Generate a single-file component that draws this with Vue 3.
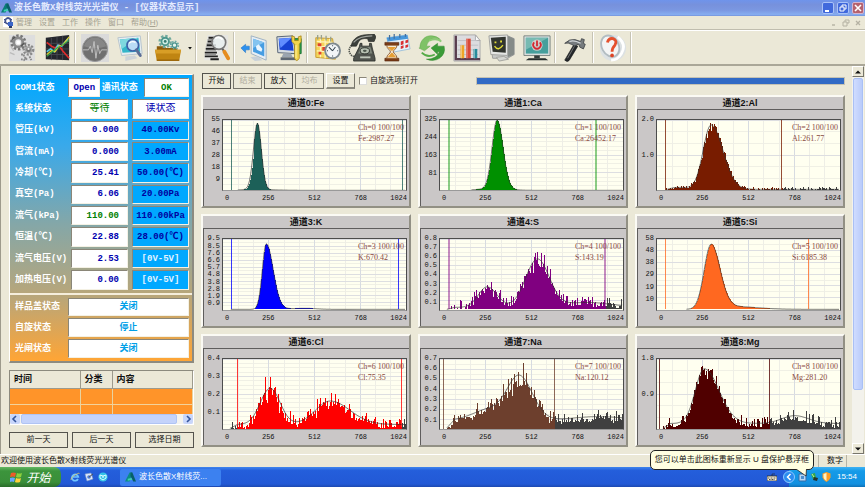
<script setup>
import { ref } from 'vue'

const W = 186
const H = 72

// Each peak: [centre, height, left sigma, right sigma] in plot units.
const specs = [
  { el: 'Fe', total: '2987.27', ticks: ['55', '46', '37', '28', '18', '9'], color: '#1c6058', start: 15, peaks: [[35, 68, 4, 4], [27, 1, 8, 20]], base: 0, noise: 0, marks: [9, 182], soft: 1 },
  { el: 'Ca', total: '26452.17', ticks: ['325', '244', '163', '81'], color: '#009000', start: 32, peaks: [[58, 70, 5, 6], [55, 2, 14, 14]], base: 0, noise: 0, marks: [9, 159], soft: 2 },
  { el: 'Al', total: '261.77', ticks: ['2.0', '1.0'], color: '#781c00', start: 9, peaks: [[55, 66, 8, 12], [22, 2, 9, 12]], base: 1, noise: 0.16, marks: [9, 127], soft: 1 },
  { el: 'K', total: '670.42', ticks: ['9.5', '8.5', '7.6', '6.6', '5.7', '4.8', '3.8', '2.8', '1.9', '0.9'], color: '#0000ff', start: 8, peaks: [[44, 67, 4, 7], [85, 1, 20, 10]], base: 0, noise: 0.02, marks: [9, 178], soft: 1 },
  { el: 'S', total: '143.19', ticks: ['0.8', '0.7', '0.6', '0.5', '0.4', '0.3', '0.2', '0.1'], color: '#800080', start: 7, peaks: [[48, 21, 9, 10], [99, 49, 12, 12], [150, 5, 25, 25]], base: 2, noise: 0.3, marks: [9, 168], soft: 2 },
  { el: 'Si', total: '6185.38', ticks: ['58', '48', '38', '29', '19', '10'], color: '#ff6820', start: 30, peaks: [[55, 66, 7, 9], [75, 3, 12, 25]], base: 0, noise: 0, marks: [9, 154], soft: 1 },
  { el: 'Cl', total: '75.35', ticks: ['0.4', '0.3', '0.2', '0.1'], color: '#ff0000', start: 7, peaks: [[48, 37, 10, 10], [109, 24, 15, 20]], base: 4, noise: 0.42, marks: [15, 181], soft: 1 },
  { el: 'Na', total: '120.12', ticks: ['0.7', '0.6', '0.5', '0.4', '0.3', '0.2', '0.1'], color: '#6d3f2d', start: 7, peaks: [[81, 40, 12, 13], [52, 12, 18, 26], [160, 4, 25, 30]], base: 8, noise: 0.3, marks: [4, 116], soft: 1 },
  { el: 'Mg', total: '281.20', ticks: ['1.8', '0.9'], color: '#500000', start: 6, peaks: [[48, 56, 9, 15], [140, 8, 13, 14]], base: 5, noise: 0.13, marks: [3, 114], soft: 1 }
]

function level(s, x) {
  let y = s.base * Math.min(1, Math.max(0, (x - s.start) / 8))
  for (const [c, h, l, r] of s.peaks) {
    const d = (x - c) / (x < c ? l : r)
    y += h * Math.exp((-d * d) / 2)
  }
  return y
}

function build(s, index) {
  let seed = 37 + index * 101
  const rand = () => {
    seed = (seed * 1103515245 + 12345) % 2147483648
    return seed / 2147483648
  }
  let inside = ''
  let outside = ''
  let curve = ''
  for (let x = s.start; x < W; x++) {
    const smooth = level(s, x)
    const jitter = (rand() + rand() - 0.95) * s.noise
    const spike = s.base ? (rand() ** 2 - 0.3) * (s.base > 1 ? 11 : 3) : 0
    const y = Math.max(0, Math.min(H, smooth * (1 + jitter) + spike))
    const bar = `M${x} ${H}V${(H - y).toFixed(1)}h1V${H}z`
    const out = s.noise >= 0.1 && (x > s.marks[1] || (s.marks[0] > 12 && x < s.marks[0]))
    if (out) outside += bar
    else if (y > 0.4) inside += bar
    curve += `${curve ? 'L' : 'M'}${x} ${(H - smooth - (s.base > 3 ? 1 : 0)).toFixed(1)}`
  }
  const n = s.ticks.length
  const minor = n === 2 ? 6 : n === 4 ? 16 : n
  return {
    ...s,
    index,
    inside,
    outside,
    curve,
    major: s.ticks.map((_, i) => (i * H) / n),
    minor: Array.from({ length: minor }, (_, i) => (i * H) / minor + (minor === n ? H / n / 2 : 0))
  }
}

const charts = specs.map(build)
const columns = Array.from({ length: 11 }, (_, i) => ({ x: ((i + 1) * W) / 12, major: (i + 1) % 3 === 0 }))

const readings = [
  { label: '管压(kV)', value: '0.000', limit: '40.00Kv' },
  { label: '管流(mA)', value: '0.000', limit: '3.00mA' },
  { label: '冷却(℃)', value: '25.41', limit: '50.00(℃)' },
  { label: '真空(Pa)', value: '6.06', limit: '20.00Pa' },
  { label: '流气(kPa)', value: '110.00', limit: '110.00kPa', ok: true },
  { label: '恒温(℃)', value: '22.88', limit: '28.00(℃)' },
  { label: '流气电压(V)', value: '2.53', limit: '[0V-5V]', range: true },
  { label: '加热电压(V)', value: '0.00', limit: '[0V-5V]', range: true }
]
const switches = [
  { label: '样品盖状态', value: '关闭' },
  { label: '自旋状态', value: '停止' },
  { label: '光闸状态', value: '关闭' }
]
const menus = ['管理', '设置', '工作', '操作', '窗口']
const spin = ref(false)
</script>

<template>
  <div class="shell">
    <header class="titlebar">
      <svg class="logo" viewBox="0 0 12 12"><path d="M0 11 5 1l3 0-3 10z" fill="#087d78" /><path d="M6 1h2l4 10H9L6 5z" fill="#075f68" /><path d="M3 8l4-1 1 2-5 1z" fill="#3fd0b0" /></svg>
      <h1>波长色散X射线荧光光谱仪 - [仪器状态显示]</h1>
      <div class="winbtns">
        <button aria-label="最小化"><svg viewBox="0 0 10 10"><path d="M2 7h4v2H2z" fill="#fff" /></svg></button>
        <button aria-label="还原"><svg viewBox="0 0 10 10"><path d="M4 4V2h4v4H6M2 4h4v4H2z" fill="none" stroke="#fff" /></svg></button>
        <button class="close" aria-label="关闭"><svg viewBox="0 0 10 10"><path d="M2 2l6 6M8 2L2 8" stroke="#fff" stroke-width="1.6" /></svg></button>
      </div>
    </header>

    <nav class="menubar">
      <svg class="menuicon" viewBox="0 0 11 11"><rect width="10" height="10" fill="#fff" /><circle cx="5" cy="4" r="2.8" fill="none" stroke="#42538c" stroke-width="1.8" /><path d="M4 0h2M1 2l1 1M9 2L8 3M1 6l1-1" stroke="#42538c" /><path d="M5 5h5v4H5z" fill="#3b66c9" /><path d="M6 9h3v2H6z" fill="#2a3a66" /></svg>
      <a v-for="m in menus" :key="m" href="#">{{ m }}</a>
      <a href="#">帮助(<u>H</u>)</a>
      <div class="mdi">
        <button aria-label="最小化子窗口"><svg viewBox="0 0 8 8"><path d="M2 6h3" stroke="#b5b2a3" stroke-width="1.4" /></svg></button>
        <button aria-label="还原子窗口"><svg viewBox="0 0 8 8"><path d="M3 3V1h4v3H5M1 3h4v4H1z" fill="none" stroke="#b5b2a3" /></svg></button>
        <button aria-label="关闭子窗口"><svg viewBox="0 0 8 8"><path d="M2 2l4 4M6 2L2 6" stroke="#b5b2a3" stroke-width="1.3" /></svg></button>
      </div>
    </nav>

    <div class="toolbar" role="toolbar" aria-label="工具栏">
      <button aria-label="系统设置">
        <svg viewBox="0 0 30 30">
          <rect x="1" y="1" width="28" height="28" fill="#dedede" />
          <circle cx="11" cy="9" r="7.2" fill="none" stroke="#777" stroke-width="3" stroke-dasharray="2.6 1.9" />
          <circle cx="11" cy="9" r="4.8" fill="#e9e9e9" stroke="#8b8b8b" stroke-width="3" />
          <circle cx="11" cy="9" r="2" fill="#fff" />
          <path d="M4 6l4-3M14 13l3-3" stroke="#555" stroke-width="1.5" />
          <circle cx="22" cy="17" r="5" fill="none" stroke="#8a8a8a" stroke-width="2.6" stroke-dasharray="2.2 1.5" />
          <circle cx="22" cy="17" r="3.2" fill="#777" stroke="#a5a5a5" stroke-width="1.5" />
          <circle cx="22" cy="16" r="1.2" fill="#eee" />
          <path d="M14 22h3v2l2 2-2 2-3-1M23 24l2 4M19 26l2 2" fill="none" stroke="#8a8a8a" stroke-width="2" stroke-dasharray="2 1" />
          <path d="M2 20l5 2M3 13l3 5" stroke="#bbb" stroke-width="1.4" />
        </svg>
      </button>
      <button aria-label="谱线">
        <svg viewBox="0 0 30 30">
          <path d="M3 4L28 1v27l-25-1z" fill="#24262d" />
          <path d="M3 10h25M3 16h25M3 22h25M9 4v24M15 3v25M21 2v26" stroke="#4d4e56" stroke-width=".8" />
          <path d="M4 9l5 4 4 2 4-3 4 6 7 8" fill="none" stroke="#e12b2b" stroke-width="1.8" />
          <path d="M4 19l4-3 4 3 4-7 4 1 7-8" fill="none" stroke="#55c7e6" stroke-width="1.8" />
          <path d="M4 22l5-4 4 1 4-6 4-1 7-9" fill="none" stroke="#d9cf32" stroke-width="1.4" />
          <path d="M4 24l6-5 5-4 4-2 9-6" fill="none" stroke="#37a24a" stroke-width="1.2" />
        </svg>
      </button>
      <i></i>
      <button aria-label="波形">
        <svg viewBox="0 0 30 30">
          <rect width="30" height="30" fill="#dadada" />
          <circle cx="15" cy="16" r="13.5" fill="#707070" stroke="#999" />
          <path d="M3 13a12.4 12.4 0 0 1 24 0q-12 4-24 0z" fill="#868686" />
          <path d="M2 17h6l2-4 2 7 2-12 2 18 2-14 2 9 2-4h6" fill="none" stroke="#c2c2c2" stroke-width="1" />
        </svg>
      </button>
      <button aria-label="监视">
        <svg viewBox="0 0 30 30">
          <path d="M2 4l24-2 2 19-22 2z" fill="#e8eef2" stroke="#b5c3cc" />
          <path d="M4 6l20-2 2 15-19 1z" fill="#35b6c9" />
          <path d="M4 6l20-2-18 12z" fill="#7ed8df" />
          <path d="M10 24l10-1 3 3-13 3z" fill="#cdd3d8" />
          <circle cx="18" cy="12" r="6.2" fill="#b9dcf5" stroke="#3d62a8" stroke-width="1.8" />
          <path d="M14 10q3-3 7-1" fill="none" stroke="#fff" stroke-width="1.5" />
          <path d="M22 17l4 6" stroke="#5b6e96" stroke-width="3.2" stroke-linecap="round" />
        </svg>
      </button>
      <i></i>
      <button aria-label="打开文件夹">
        <svg viewBox="0 0 30 30">
          <path d="M3 13h8l2 2h12v7H3z" fill="#8d5c0d" />
          <circle cx="12" cy="8" r="6" fill="none" stroke="#70a99d" stroke-width="2.4" stroke-dasharray="2.6 2" />
          <circle cx="12" cy="8" r="4" fill="#d5efe7" stroke="#4d978c" stroke-width="2" />
          <circle cx="12" cy="8" r="1.5" fill="#357b72" />
          <circle cx="22" cy="12" r="4" fill="none" stroke="#69aaa5" stroke-width="2" stroke-dasharray="1.8 1.3" />
          <circle cx="22" cy="12" r="2.4" fill="#e4f5ef" stroke="#4b938d" stroke-width="1.3" />
          <path d="M1 17h28l-2 12H3z" fill="#c08512" />
          <path d="M1 17h28l-1 4H2z" fill="#d89e26" />
          <path d="M3 28h24" stroke="#865609" />
        </svg>
      </button>
      <button class="drop" aria-label="更多"><svg viewBox="0 0 10 30"><path d="M3 14h4l-2 2.500z" fill="#111" /></svg></button>
      <i></i>
      <button aria-label="查找文档">
        <svg viewBox="0 0 30 30">
          <path d="M6 1h22v27H2z" fill="#e6e6e2" />
          <path d="M7 4h8M6 8h7M5 12h10M4 16h14M3 20h13M3 24h14M9 27h9" stroke="#202020" stroke-width="2" />
          <path d="M6 6h6M5 10h8M4 14h11M4 18h11M3 22h12" stroke="#777" stroke-width=".8" />
          <circle cx="18" cy="9" r="7.4" fill="#e8eef0" fill-opacity=".85" stroke="#777" stroke-width="1.8" />
          <path d="M14 5q4-3 8 1" stroke="#fff" stroke-width="1.8" fill="none" />
          <path d="M22 16l2 3" stroke="#555" stroke-width="2" />
          <path d="M24 19l4 7" stroke="#e58c20" stroke-width="4" stroke-linecap="round" />
        </svg>
      </button>
      <i></i>
      <button aria-label="返回">
        <svg viewBox="0 0 30 30">
          <path d="M12 2l16 5v21L12 21z" fill="#e7eef4" stroke="#9baec0" />
          <path d="M14 5l12 4v15l-12-5z" fill="#469de2" />
          <path d="M14 5l12 4-12 6z" fill="#85c4f0" />
          <path d="M17 13l3-2 4 5-1 3-5-2z" fill="#eaf6ff" />
          <path d="M11 25l8-1 5 4-8 1z" fill="#c7d0d8" />
          <path d="M1 15l5-4v2h4v4H6v3z" fill="#2d91ef" stroke="#1769bb" stroke-width=".5" />
        </svg>
      </button>
      <button aria-label="维护">
        <svg viewBox="0 0 30 30">
          <path d="M17 5h11v16H17z" fill="#30a34d" stroke="#146b2b" />
          <path d="M20 8h6v8h-6z" fill="#82da78" />
          <path d="M2 3l17-1 3 19-19-1z" fill="#d5dce3" stroke="#536072" />
          <path d="M4 5l14-1 2 14-15-1z" fill="#1742d2" />
          <path d="M4 5l14-1L6 15z" fill="#608cff" />
          <path d="M9 21h8l2 4H7z" fill="#9aa4b0" />
          <path d="M6 25h16v3H6z" fill="#5d6774" />
          <path d="M18 2v6l3 3v15q2 5 5 0V11l2-3V2l-3 1v4h-4V3z" fill="#f1d54d" stroke="#a27e12" stroke-width=".8" />
          <path d="M22.500 12v14" stroke="#fff5ad" />
        </svg>
      </button>
      <i></i>
      <button aria-label="计划">
        <svg viewBox="0 0 30 30">
          <path d="M3 4l18 1 3 22-21-2z" fill="#f5d65a" stroke="#c79a30" />
          <path d="M4 8l17 1M4 13l17 1M4 18l17 1M8 5v20M13 5v21M18 5v21" stroke="#fff4bd" stroke-width="1.4" />
          <path d="M5 1v5M9 1v5M14 2v5M19 3v5" stroke="#98a18c" stroke-width="1.4" />
          <path d="M5 10h4v3H5zM10 14h4v4h-4zM6 19h3v3H6z" fill="#df432e" />
          <circle cx="21" cy="18" r="8" fill="#f2f5f7" stroke="#7e8990" stroke-width="2" />
          <path d="M21 18l-4-4M21 18l3-4M21 12v1M21 23v1M15 18h1M26 18h1" fill="none" stroke="#34434e" stroke-width="1.1" />
        </svg>
      </button>
      <button aria-label="通讯">
        <svg viewBox="0 0 30 30">
          <path d="M4 12Q-1 17 3 22q2 3 5 1" fill="none" stroke="#50544d" stroke-width="1.600" stroke-dasharray="1.500 .8" />
          <path d="M3 13L5 8Q9 2 17 1l11-1 2 3-2 5h-6l-1-3q-8-1-10 4l-2 4z" fill="#3c403b" stroke="#242724" stroke-width=".7" />
          <path d="M6 9Q12 2 26 2" fill="none" stroke="#a1a49e" stroke-width="1.200" />
          <path d="M12 14l1-4h2v3h8v-3h2l1 5 3 11v3H6v-3z" fill="#50544e" stroke="#262a26" stroke-width=".8" />
          <path d="M13 14h11l2 7H11z" fill="#7d857a" />
          <ellipse cx="18" cy="18" rx="5" ry="3.300" fill="#b6c0b1" stroke="#262b26" />
          <ellipse cx="18" cy="18" rx="2" ry="1.200" fill="#4b564b" />
          <path d="M13 25h11" stroke="#c0c8bb" stroke-width="2" />
        </svg>
      </button>
      <button aria-label="等待">
        <svg viewBox="0 0 30 30">
          <path d="M4 4l22-3 3 15-21 4z" fill="#e6f3fb" stroke="#9dc0d8" />
          <path d="M4 4l22-3 1 4-22 3z" fill="#4797db" />
          <path d="M7 1v5M12 0v5M18 0v4M24 0v3" stroke="#466e99" stroke-width="1.300" />
          <path d="M19 8l3-1v4l-3 1zM24 7l3-1v3l-3 1zM19 13l3-1v3l-3 1zM24 12l3-1v3l-3 1z" fill="#da2f32" />
          <path d="M2 9h15v3H2zM2 26h15v3H2z" fill="#7a3b16" stroke="#4d210a" stroke-width=".6" />
          <path d="M4 12h11c0 4-4 5-4 7s4 3 4 7H4c0-4 4-5 4-7s-4-3-4-7z" fill="#f6ead5" stroke="#8f5829" />
          <path d="M5 14h9l-4 4H9zM9 20h1l4 5H5z" fill="#e59f35" />
        </svg>
      </button>
      <button aria-label="刷新">
        <svg viewBox="0 0 30 30">
          <path d="M2 15C2 6 9 1 15 2q5 0 9 4-12-4-15 7h4l-6 5-6-3z" fill="#7fc267" stroke="#5aa548" stroke-width=".5" />
          <path d="M14 15l7-5v3h7q2 8-5 13-6 4-14 1 11 0 14-8h-2v3z" fill="#3b9b38" stroke="#2d832c" stroke-width=".5" />
          <path d="M12 7q8-3 13 1" fill="none" stroke="#8dcb77" stroke-width="2" />
          <path d="M4 20q6 6 14 2" fill="none" stroke="#56ab49" stroke-width="2" />
        </svg>
      </button>
      <button aria-label="报表">
        <svg viewBox="0 0 30 30">
          <path d="M1 1h23l5 6v22H1z" fill="#dcdcdf" stroke="#aaa" />
          <path d="M24 1v6h5z" fill="#f9f9f9" stroke="#aaa" />
          <path d="M3 2v25h26" fill="none" stroke="#593d4e" stroke-width="2.500" />
          <path d="M5 7h21M5 12h22M5 17h22M5 22h22" stroke="#bfc0c5" />
          <path d="M8 12h4v14H8z" fill="#eea526" />
          <path d="M14 5h5v21h-5z" fill="#d94937" />
          <path d="M22 16h4v10h-4z" fill="#278b9b" />
          <path d="M9 12v14M15 5v21M23 16v10" stroke="#fff" stroke-opacity=".45" />
        </svg>
      </button>
      <button aria-label="在线状态">
        <svg viewBox="0 0 30 30">
          <path d="M2 2h19l7 3v17l-7 4H5z" fill="#c7c9c7" stroke="#999" />
          <path d="M21 2l7 3v17l-7 3z" fill="#858b88" />
          <path d="M1 2l20-1v22L3 22z" fill="#e4e5e3" stroke="#a0a19e" />
          <path d="M3 4l16-1v17L5 19z" fill="#32352f" />
          <path d="M7 13q4 6 9-1" fill="none" stroke="#e2dc36" stroke-width="1.500" />
          <path d="M8 8v2M14 7v2" stroke="#e2dc36" stroke-width="2" />
          <path d="M9 25l8-1 5 3-10 2z" fill="#d5d6d2" stroke="#a2a29d" />
        </svg>
      </button>
      <button aria-label="电源">
        <svg viewBox="0 0 30 30">
          <path d="M1 2h28v21H1z" fill="#dce2e1" stroke="#75817e" />
          <path d="M3 4h24v17H3z" fill="#469f9c" />
          <path d="M3 4h24L3 17z" fill="#77bab2" />
          <circle cx="15" cy="12" r="6" fill="#f1d7d5" fill-opacity=".75" />
          <path d="M12 9a4 4 0 1 0 6 0M15 7v6" fill="none" stroke="#d52730" stroke-width="1.900" />
          <path d="M12 23h6v3h-6z" fill="#333c3a" /><path d="M6 26h18l3 2H3z" fill="#252d2c" />
        </svg>
      </button>
      <i></i>
      <button aria-label="工具">
        <svg viewBox="0 0 30 30">
          <path d="M14 11l4 2-9 15q-2 3-5 0z" fill="#24282b" stroke="#0f1112" stroke-width=".6" />
          <path d="M15 12L7 26" stroke="#777" />
          <path d="M4 10q5-5 11-4l6 2 1-3 3 1-1 4 2 1-2 5-4-2v-2l-3-1-2 2-4-2q-3-2-7-1z" fill="#777c7f" stroke="#34393d" stroke-width=".8" />
          <path d="M9 8q5-2 12 2" stroke="#d5dadd" fill="none" stroke-width="1.200" />
        </svg>
      </button>
      <i></i>
      <button aria-label="帮助">
        <svg viewBox="0 0 30 30">
          <circle cx="15" cy="15" r="14" fill="#dce1e3" />
          <ellipse cx="12" cy="13" rx="9" ry="12" transform="rotate(-28 12 13)" fill="#f4f5f5" stroke="#b2bcc1" stroke-width="2" />
          <path d="M20 3q10 8 4 18-4 7-11 7" fill="none" stroke="#fff" stroke-width="3" />
          <path d="M9 9q1-5 6-4 5 2 2 7-3 3-3 7" fill="none" stroke="#e5502d" stroke-width="3" />
          <circle cx="14" cy="23" r="2" fill="#dc4425" />
        </svg>
      </button>
      <i></i>
    </div>

    <main class="workspace">
      <aside class="side">
        <section class="status">
          <div class="group readings">
            <div class="row first">
              <label for="com">COM1状态</label><input id="com" class="blue" value="Open" readonly />
              <label for="link">通讯状态</label><input id="link" class="green" value="OK" readonly />
            </div>
            <div class="row">
              <label for="sys">系统状态</label><input id="sys" class="large green" value="等待" readonly />
              <input class="large blue" aria-label="状态读取" value="读状态" readonly />
            </div>
            <div v-for="(r, i) in readings" :key="r.label" class="row">
              <label :for="'reading' + i">{{ r.label }}</label>
              <input :id="'reading' + i" class="num" :class="r.ok ? 'green' : 'blue'" :value="r.value" readonly />
              <input class="limit" :class="{ range: r.range }" :aria-label="r.label + '设定'" :value="r.limit" readonly />
            </div>
          </div>
          <div class="group switches">
            <div v-for="(s, i) in switches" :key="s.label" class="row wide">
              <label :for="'switch' + i">{{ s.label }}</label>
              <input :id="'switch' + i" class="sky" :value="s.value" readonly />
            </div>
          </div>
        </section>

        <div class="log">
          <table>
            <thead><tr><th class="c1">时间</th><th class="c2">分类</th><th>内容</th></tr></thead>
            <tbody><tr><td></td><td></td><td></td></tr><tr class="short"><td></td><td></td><td></td></tr></tbody>
          </table>
          <div class="hscroll">
            <button aria-label="向左滚动"><svg viewBox="0 0 8 8"><path d="M5 1L2 4l3 3" fill="none" stroke="#34549b" stroke-width="1.600" /></svg></button>
            <span class="hthumb"></span>
            <button aria-label="向右滚动"><svg viewBox="0 0 8 8"><path d="M3 1l3 3-3 3" fill="none" stroke="#34549b" stroke-width="1.600" /></svg></button>
          </div>
        </div>
        <div class="days"><button class="flat">前一天</button><button class="flat">后一天</button><button class="flat">选择日期</button></div>
      </aside>

      <section class="content">
        <div class="controls">
          <button class="flat">开始</button>
          <button class="flat" disabled>结束</button>
          <button class="flat">放大</button>
          <button class="flat" disabled>均布</button>
          <button class="raised">设置</button>
          <input id="spin" v-model="spin" type="checkbox" /><label for="spin">自旋选项打开</label>
          <progress value="100" max="100" aria-label="测量进度"></progress>
        </div>
        <div class="charts">
          <article v-for="c in charts" :key="c.el" class="card">
            <h2>通道{{ c.index }}:{{ c.el }}</h2>
            <div class="chart">
              <div class="yaxis"><span v-for="t in c.ticks" :key="t">{{ t }}</span></div>
              <div class="plot">
                <svg viewBox="0 0 186 72" preserveAspectRatio="none" shape-rendering="crispEdges">
                  <line v-for="y in c.minor" :key="'n' + y" x1="0" x2="186" :y1="y" :y2="y" stroke="#f0f0e4" />
                  <line v-for="g in columns" :key="g.x" :x1="g.x" :x2="g.x" y1="0" y2="72" :stroke="g.major ? '#d6dae0' : '#eeeee6'" />
                  <line v-for="y in c.major" :key="'m' + y" x1="0" x2="186" :y1="y" :y2="y" stroke="#dcdde0" />
                  <path :d="c.outside" fill="#404040" />
                  <path :d="c.inside" :fill="c.color" />
                  <path :d="c.curve" fill="none" stroke="#333" stroke-width=".7" shape-rendering="auto" />
                  <line v-for="m in c.marks" :key="m" :x1="m" :x2="m" y1="0" y2="72" :stroke="c.color" :stroke-width="c.soft" :stroke-opacity="c.soft === 2 ? 0.45 : 0.8" />
                </svg>
                <p class="legend">Ch={{ c.index }} 100/100<br />{{ c.el }}:{{ c.total }}</p>
              </div>
              <div class="xaxis"><span>0</span><span>256</span><span>512</span><span>768</span><span>1024</span></div>
            </div>
          </article>
        </div>
      </section>

      <div class="vscroll">
        <button aria-label="向上滚动"><svg viewBox="0 0 8 8"><path d="M1 5.500h6L4 2.500z" fill="#111" /></svg></button>
        <span class="vthumb"></span>
        <span class="vtrack"></span>
        <button aria-label="向下滚动"><svg viewBox="0 0 8 8"><path d="M1 2.500h6L4 5.500z" fill="#111" /></svg></button>
      </div>
    </main>

    <div class="statusbar"><span>欢迎使用波长色散X射线荧光光谱仪</span><span class="pane">数字</span><span class="pane"></span></div>

    <footer class="taskbar">
      <button class="start">
        <svg viewBox="0 0 12 12"><path d="M1 2q2-1 5 0L5 6Q3 5 0 6z" fill="#ee5a29" /><path d="M7 2q2 1 5 0l-1 4q-3 1-5 0z" fill="#8dd03c" /><path d="M0 7q3-1 5 0l-1 4q-2-1-4 0z" fill="#66a5ff" /><path d="M6 7q3 1 5 0l-1 4q-3 1-5 0z" fill="#ffd23b" /></svg>
        开始
      </button>
      <div class="quick">
        <button aria-label="浏览器"><svg viewBox="0 0 10 10"><path d="M8 7a3.200 3.200 0 1 1 .3-2H3" fill="none" stroke="#6fc4ff" stroke-width="1.700" /><path d="M1 8Q0 6 5 3t4-1" fill="none" stroke="#f0d35a" stroke-width=".7" /></svg></button>
        <button aria-label="显示桌面"><svg viewBox="0 0 10 10"><path d="M1 2l6-1 2 6-6 2z" fill="#dfe9f8" stroke="#7f97c8" stroke-width=".6" /><circle cx="5" cy="5" r="1.800" fill="#4f7cd5" /><path d="M5 5l4-3" stroke="#555" /></svg></button>
        <button aria-label="安全工具"><svg viewBox="0 0 10 10"><circle cx="5" cy="5" r="4.600" fill="#35c4e8" /><path d="M2 3l3 1 3-1v3L5 8 2 6z" fill="none" stroke="#dff" /><path d="M4 5h2" stroke="#fff" /></svg></button>
      </div>
      <button class="task">
        <svg viewBox="0 0 12 12"><path d="M0 11 5 1l3 0-3 10z" fill="#0a8d84" /><path d="M6 1h2l4 10H9L6 5z" fill="#075f68" /><path d="M3 8l4-1 1 2-5 1z" fill="#3fd0b0" /></svg>
        波长色散X射线荧...
      </button>
      <svg class="keyboard" viewBox="0 0 10 8"><path d="M0 3h10v5H0z" fill="#fff8df" stroke="#222" stroke-width=".8" /><path d="M1 5h8M2 6.500h6" stroke="#222" stroke-width=".8" stroke-dasharray="1 .5" /><path d="M5 3V1h3" fill="none" stroke="#222" stroke-width=".6" /></svg>
      <div class="tray">
        <button class="chevron" aria-label="隐藏图标"><svg viewBox="0 0 12 12"><circle cx="6" cy="6" r="5.500" fill="#2b8df0" stroke="#8ec8ff" /><path d="M7.500 3L4.500 6l3 3" fill="none" stroke="#fff" stroke-width="1.500" /></svg></button>
        <svg viewBox="0 0 9 10"><path d="M1 2h7v7H1z" fill="#b8d8f4" stroke="#356ca8" /><path d="M3 4h3v3H3z" fill="#4a8fd0" /></svg>
        <svg viewBox="0 0 9 10"><path d="M1 2l4-1 1 5-3 1z" fill="#38a544" /><path d="M4 5l4 1-1 3-4-1z" fill="#26332b" /><path d="M2 2l2 3" stroke="#bff0a0" /></svg>
        <svg viewBox="0 0 9 10"><path d="M4.500 0l4 1.500v4q-1 3-4 4.500-3-1.500-4-4.500v-4z" fill="#ff9c22" /><path d="M4.500 1v8q-3-1.500-3-4V2z" fill="#fff1c4" /></svg>
        <time>15:54</time>
        <div class="balloon" role="status">
          您可以单击此图标重新显示 U 盘保护悬浮框
          <svg viewBox="0 0 14 8"><path d="M0 0l10 7 .5-7" fill="#ffffe1" stroke="#222" stroke-width=".8" /></svg>
        </div>
      </div>
    </footer>
  </div>
</template>

<style>
body { margin: 0; background: #ece9d8; }
</style>

<style scoped>
* { box-sizing: border-box; }
.shell {
  min-height: 100vh;
  display: flex;
  flex-direction: column;
  background: #ebe8d7;
  color: #111;
  font: 8px/12px "Liberation Sans", "Noto Sans CJK SC", sans-serif;
}
button { font: inherit; color: inherit; padding: 0; margin: 0; border: 0; background: none; white-space: nowrap; }
input { font: inherit; margin: 0; min-width: 0; }
svg { display: block; flex: none; }
h1, h2, p { margin: 0; }

.titlebar { height: 16px; display: flex; align-items: center; gap: 2px; padding: 0 1px; color: #fff; background: linear-gradient(#6f94eb, #7791dc 30%, #7b98e2 65%, #86adf0 90%, #7493dc); }
.logo { width: 11px; height: 12px; }
h1 { flex: 1; font: bold 9px/14px "Liberation Mono", "Noto Sans CJK SC", monospace; color: #e4ebff; }
.winbtns { display: flex; gap: 3px; }
.winbtns button { width: 12px; height: 12px; border: 1px solid #a9c2f8; border-radius: 2px; background: #4169dc; }
.winbtns .close { background: #b5626e; border-color: #d5b5d0; }
.winbtns svg { width: 10px; height: 10px; }

.menubar { height: 14px; display: flex; align-items: center; gap: 7px; padding: 0 3px; border-bottom: 1px solid #c0bdae; }
.menubar a { color: #a5a292; text-decoration: none; }
.menuicon { width: 11px; height: 11px; margin-right: -5px; }
.mdi { margin-left: auto; display: flex; gap: 4px; }
.mdi svg { width: 8px; height: 8px; }

.toolbar { height: 36px; display: flex; align-items: center; padding-left: 4px; border-top: 1px solid #fff; border-bottom: 2px solid #aaa798; }
.toolbar button { width: 35px; height: 31px; display: flex; align-items: center; justify-content: center; }
.toolbar svg { width: 28px; height: 28px; }
.toolbar .drop { width: 10px; }
.toolbar .drop svg { width: 10px; }
.toolbar i { width: 2px; height: 31px; margin-right: 1px; border-left: 1px solid #c6c3b4; border-right: 1px solid #fff; }

.workspace { flex: 1; display: flex; border-left: 1px solid #9d9a8c; }
.side { width: 185px; margin: 8px 7px 6px 8px; display: flex; flex-direction: column; gap: 7px; flex: none; }
.status { flex: 1; display: flex; flex-direction: column; border: 1px solid #fff; border-right: 2px solid #8d8b80; border-bottom: 2px solid #8d8b80; background: linear-gradient(#00a8ff, #3aa9ea 25%, #84a7a8 52%, #baa678 78%, #ffa535); }
.group { display: grid; gap: 2px; padding: 3px 3px 3px 5px; }
.readings { flex: 7 1 0; grid-auto-rows: 1fr; border-bottom: 2px solid #f5eedc; }
.switches { flex: 2 1 0; grid-auto-rows: 1fr; }
.row { display: grid; grid-template-columns: 52px 57px 57px; justify-content: space-between; align-items: stretch; min-height: 0; column-gap: 1px; font: bold 9px/12px "Liberation Mono", "Noto Sans CJK SC", monospace; }
.row.first { grid-template-columns: 52px 32px 41px 45px; }
.row.wide { grid-template-columns: 52px 121px; }
.row label { align-self: center; color: #fff; white-space: nowrap; }
.row input { width: 100%; padding: 0; text-align: center; background: #fff; border: 1px solid #8a8678; border-right-color: #f4f1e4; border-bottom-color: #f4f1e4; }
.row .blue { color: #0000b0; }
.row .green { color: #008000; }
.row .sky { color: #00a0e8; }
.row .large { font-size: 10px; font-weight: 400; }
.row .num { text-align: right; padding-right: 8px; }
.row .limit { background: #00a8ff; color: #0000a0; }
.row .range { color: #e3f4ff; }

.log { border: 1px solid #8c8a7e; border-right-color: #fff; border-bottom-color: #fff; }
table { width: 100%; border-collapse: collapse; table-layout: fixed; }
th { height: 17px; padding: 0 4px; text-align: left; font: bold 9px/12px "Noto Sans CJK SC", sans-serif; border-right: 1px solid #9d9a8c; border-bottom: 1px solid #9d9a8c; }
.c1 { width: 70px; }
.c2 { width: 32px; }
td { height: 16px; padding: 0; background: #ff9429; border-right: 1px solid #e8d3a0; border-bottom: 1px solid #f3d29b; }
.short td { height: 10px; border-bottom: 0; }
.hscroll { display: flex; gap: 1px; height: 10px; background: #f4f3ee; }
.hscroll button { width: 10px; background: #c8d6fb; border-radius: 2px; }
.hscroll svg { width: 8px; height: 8px; margin: 0 auto; }
.hthumb { flex: 1; margin-right: 5px; border-radius: 2px; border: 1px solid #b0c4f4; background: #c4d3fb; }
.days { display: grid; grid-template-columns: 1fr 1fr 1fr; gap: 4px; }
.flat { height: 16px; border: 1px solid #54534d; line-height: 12px; }
.flat:disabled { color: #b0ad9e; border-color: #77756b; }

.content { flex: 1; min-width: 0; display: flex; flex-direction: column; gap: 6px; padding: 7px 7px 7px 0; }
.controls { display: flex; align-items: center; gap: 2px; height: 16px; padding-left: 1px; }
.controls button { width: 29px; }
.raised { height: 16px; border: 1px solid #fff; border-right-color: #77756b; border-bottom: 2px solid #8d8b80; }
.controls input { width: 8px; height: 8px; margin: 0 1px 0 2px; appearance: none; background: #fff; border: 1px solid #8a8678; border-right-color: #ddd; border-bottom-color: #ddd; }
.controls input:checked { background: #316ac5; }
progress { flex: 1; min-width: 0; height: 8px; margin-left: 56px; appearance: none; border: 1px solid #c5c2b3; background: #fff; }
progress::-webkit-progress-bar { background: #fff; }
progress::-webkit-progress-value { background: #316ac5; }

.charts { flex: 1; display: grid; grid-template-columns: repeat(3, minmax(0, 1fr)); grid-auto-rows: 1fr; gap: 6px 7px; }
.card { display: flex; flex-direction: column; background: #cac7c7; border: 2px solid #fbfaf4; border-right-color: #929084; border-bottom-color: #929084; }
h2 { text-align: center; font: bold 9px/12px "Liberation Sans", "Noto Sans CJK SC", sans-serif; }
.chart { flex: 1; display: grid; grid-template-columns: 18px minmax(0, 1fr); grid-template-rows: minmax(40px, 1fr) 15px; padding: 9px 2px 0 0; border-top: 1px solid #5f5d5d; border-left: 1px solid #5f5d5d; font: 7px/14px "Liberation Mono", monospace; }
.yaxis { display: grid; grid-auto-rows: 1fr; justify-items: end; padding-right: 2px; }
.yaxis span { height: 0; line-height: 0; }
.plot { position: relative; background: #fffff0; border: 1px solid #4c4c4c; border-bottom-color: #999; overflow: hidden; }
.plot svg { position: absolute; inset: 0; width: 100%; height: 100%; }
.legend { position: absolute; top: 2px; right: 0; width: 48px; font: 8px/11px "Liberation Serif", serif; color: #8a4a42; white-space: nowrap; }
.xaxis { grid-column: 2; display: grid; grid-template-columns: repeat(8, minmax(0, 1fr)); }
.xaxis span { grid-row: 1; text-align: center; }
.xaxis span:nth-child(1) { grid-column: 1; text-align: left; padding-left: 3px; }
.xaxis span:nth-child(2) { grid-column: 2 / 4; }
.xaxis span:nth-child(3) { grid-column: 4 / 6; }
.xaxis span:nth-child(4) { grid-column: 6 / 8; }
.xaxis span:nth-child(5) { grid-column: 8; text-align: right; }

.vscroll { width: 12px; margin-right: 1px; display: flex; flex-direction: column; background: #f3f2ec; }
.vscroll button { height: 11px; background: #ece9d8; border: 1px solid #fff; border-right-color: #77756b; border-bottom-color: #77756b; }
.vscroll svg { width: 8px; height: 8px; margin: 0 auto; }
.vthumb { flex: 312 1 0; margin: 1px 1px 0; border: 1px solid #a9c0f5; border-radius: 2px; background: linear-gradient(90deg, #cfdcff, #b9cbfa); }
.vtrack { flex: 53 1 0; }

.statusbar { height: 13px; display: flex; align-items: center; padding: 0 1px; border-top: 1px solid #fff; }
.statusbar span:first-child { flex: 1; }
.pane { width: 28px; height: 12px; padding-left: 8px; border-left: 1px solid #b7b4a5; }
.pane:last-child { width: 18px; }

.taskbar { height: 20px; display: flex; align-items: center; color: #fff; background: linear-gradient(#3f86ee, #245edb 18%, #2259d6 85%, #1d49b0); }
.start { width: 61px; height: 20px; display: flex; align-items: center; justify-content: center; gap: 4px; border-radius: 0 7px 7px 0; background: linear-gradient(#63b763, #3c943c 20%, #3a8f3a 75%, #2a6d2a); font: italic 12px/16px "Noto Sans CJK SC", sans-serif; }
.start svg { width: 12px; height: 12px; }
.quick { display: flex; gap: 4px; padding: 0 12px 0 9px; }
.quick svg { width: 10px; height: 10px; }
.task { width: 101px; height: 17px; display: flex; align-items: center; gap: 3px; padding-left: 5px; border-radius: 2px; background: #3c81f0; }
.task svg { width: 11px; height: 12px; }
.keyboard { width: 10px; height: 8px; margin-left: auto; margin-right: 12px; }
.tray { position: relative; height: 20px; display: flex; align-items: center; gap: 3px; padding-right: 8px; background: linear-gradient(#3fb2f4, #159be8 20%, #1290e0 85%, #0f70b5); }
.tray > svg { width: 9px; height: 10px; }
.chevron { margin-left: -6px; }
.chevron svg { width: 12px; height: 12px; }
time { margin-left: 3px; }
.balloon { position: absolute; right: 51px; bottom: 17px; padding: 3px 4px; color: #111; background: #ffffe1; border: 1px solid #222; border-radius: 5px; white-space: nowrap; }
.balloon svg { position: absolute; top: 100%; right: 3px; width: 14px; height: 8px; }
</style>
